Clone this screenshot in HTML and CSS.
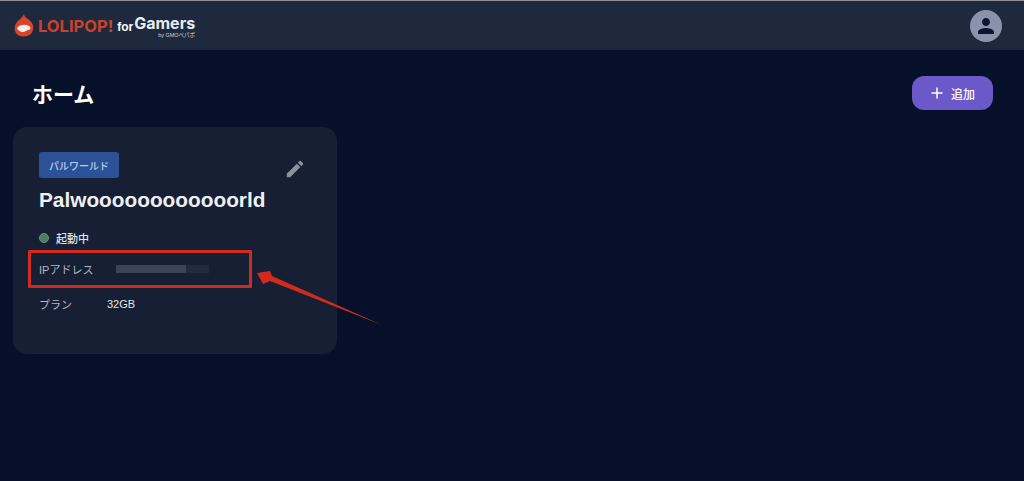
FILE: index.html
```html
<!DOCTYPE html>
<html lang="ja">
<head>
  <meta charset="UTF-8">
  <meta name="viewport" content="width=device-width, initial-scale=1.0">
  <title>LOLIPOP! for Gamers</title>
  <link rel="stylesheet" href="styles.css">
</head>
<body>
  <header class="topbar">
    <div class="logo">
      <svg class="logo-mark" width="20" height="24" viewBox="0 0 20 22" preserveAspectRatio="none">
        <path d="M10 0 C10 3 14 4 17 7 C20 10 20 15 17 18 C14.500 21 6 21.500 3 18.500 C0 15.500 0 11 2.500 8 C4.500 5.500 8 4 10 0 Z" fill="#d8432c"/>
        <path d="M3 13 C5 10 11 9 15 11 C17 12 17 14 15 14.500 C12 15 11 17 8 16.500 C6 16 4 15 3 13 Z" fill="#f3ece8"/>
      </svg>
      <span class="logo-name">LOLIPOP!</span>
      <span class="logo-for">for</span>
      <div class="logo-side">
        <span class="logo-gamers">Gamers</span>
        <span class="logo-by">by GMOペパボ</span>
      </div>
    </div>
    <div class="avatar">
      <svg width="24" height="24" viewBox="0 0 24 24">
        <path d="M12 12c2.210 0 4-1.790 4-4s-1.790-4-4-4-4 1.790-4 4 1.790 4 4 4zm0 2c-2.670 0-8 1.340-8 4v2h16v-2c0-2.660-5.330-4-8-4z" fill="#0b1430"/>
      </svg>
    </div>
  </header>

  <main class="content">
    <div class="page-head">
      <h1>ホーム</h1>
      <button class="add-btn" type="button">
        <svg width="14" height="14" viewBox="0 0 14 14">
          <path d="M7 1.500V12.500M1.500 7H12.500" stroke="#fff" stroke-width="1.500" fill="none"/>
        </svg>
        <span>追加</span>
      </button>
    </div>

    <section class="card">
      <div class="card-top">
        <span class="tag">パルワールド</span>
        <svg class="edit" width="22" height="22" viewBox="0 0 24 24">
          <path d="M3 17.250V21h3.750L17.810 9.940l-3.750-3.750L3 17.250zM20.710 7.040a1 1 0 0 0 0-1.410l-2.340-2.340a1 1 0 0 0-1.410 0l-1.830 1.830 3.750 3.750 1.830-1.830z" fill="#8b909b"/>
        </svg>
      </div>
      <h2>Palwoooooooooooorld</h2>
      <div class="status">
        <span class="dot"></span>
        <span>起動中</span>
      </div>
      <div class="row row-ip">
        <span class="label">IPアドレス</span>
        <div class="ip-mask"><div class="ip-fill"></div></div>
      </div>
      <div class="row row-plan">
        <span class="label">プラン</span>
        <span class="value">32GB</span>
      </div>
      <!-- annotation arrow on top of the screenshot -->
      <svg class="arrow" width="140" height="70" viewBox="0 0 140 70">
        <path d="M132 60 L22 11 L20 6 L7 8 L13 19 L20 16 Z" fill="#d22b1c"/>
      </svg>
    </section>
  </main>
</body>
</html>
```

FILE: styles.css
```css
* {
  box-sizing: border-box;
}

body {
  margin: 0;
  height: 481px;
  overflow: hidden;
  background-color: #061029;
  color: #fff;
  font-family: "Liberation Sans", "Noto Sans CJK JP", sans-serif;
}

.topbar {
  height: 50px;
  background-color: #1f293d;
  border-top: 1px solid #8d9098;
  display: flex;
  align-items: center;
  justify-content: space-between;
  padding: 0 22px 0 14px;
}

.logo {
  display: flex;
  align-items: center;
}

.logo-mark {
  margin-right: 4px;
}

.logo-name {
  color: #cf4029;
  font-family: "Inter", sans-serif;
  font-weight: 700;
  font-size: 16.500px;
  margin-right: 4px;
}

.logo-for {
  font-size: 12px;
  font-weight: 700;
  margin: 2px 1px 0 0;
}

.logo-side {
  display: flex;
  flex-direction: column;
  align-items: flex-end;
  padding-top: 2px;
}

.logo-gamers {
  font-family: "Inter", sans-serif;
  font-size: 16px;
  line-height: 15px;
  font-weight: 700;
  color: #e8ebef;
}

.logo-by {
  font-size: 5.500px;
  line-height: 6px;
  margin-top: 1px;
  color: #cfd3da;
}

.avatar {
  width: 32px;
  height: 32px;
  border-radius: 50%;
  background-color: #8a93ab;
  display: flex;
  align-items: center;
  justify-content: center;
}

.content {
  padding: 0 31px 0 13px;
}

.page-head {
  display: flex;
  justify-content: space-between;
  align-items: center;
  padding: 9px 0 0 19px;
  height: 77px;
}

h1 {
  margin: 0;
  font-size: 21px;
  font-weight: 700;
}

.add-btn {
  width: 81px;
  height: 34px;
  border: none;
  border-radius: 12px;
  background-color: #6b58c9;
  color: #fff;
  font-family: inherit;
  font-size: 12px;
  font-weight: 500;
  display: flex;
  align-items: center;
  justify-content: center;
  gap: 7px;
}

.card {
  position: relative;
  width: 324px;
  height: 227px;
  background-color: #161f33;
  border-radius: 14px;
  padding: 25px 26px;
}

.card-top {
  display: flex;
  justify-content: space-between;
  align-items: flex-start;
  padding-right: 5px;
}

.tag {
  height: 26px;
  padding: 0 10px;
  display: flex;
  align-items: center;
  background-color: #2b5296;
  border-radius: 3px;
  color: #b9cdf0;
  font-size: 10px;
  font-weight: 500;
}

.edit {
  margin-top: 6px;
}

h2 {
  margin: 8px 0 0;
  font-size: 20.800px;
  line-height: 24px;
  font-weight: 700;
  color: #eef0f3;
}

.status {
  display: flex;
  align-items: center;
  gap: 7px;
  margin-top: 19px;
  height: 14px;
  font-size: 11px;
  font-weight: 500;
  color: #dfe2e7;
}

.dot {
  width: 10px;
  height: 10px;
  border-radius: 50%;
  background-color: #4a7d63;
  border: 1px solid #6d8f7d;
}

.row {
  display: flex;
  align-items: center;
  font-size: 11px;
}

.label {
  width: 68px;
  color: #b4b8c1;
}

.value {
  color: #e6e8ec;
}

.row-ip {
  margin: 5px 0 0 -11px;
  width: 224px;
  height: 38px;
  padding-left: 8px;
  border: 3px solid #d22b1c;
  border-radius: 1px;
}

.row-ip .label {
  width: 77px;
}

.ip-mask {
  width: 93px;
  height: 8px;
  background-color: #232c3f;
  margin-bottom: 1px;
}

.ip-fill {
  width: 70px;
  height: 8px;
  background-color: #3b4557;
}

.row-plan {
  margin-top: 8px;
  height: 16px;
}

.arrow {
  position: absolute;
  left: 237px;
  top: 138px;
}
```
